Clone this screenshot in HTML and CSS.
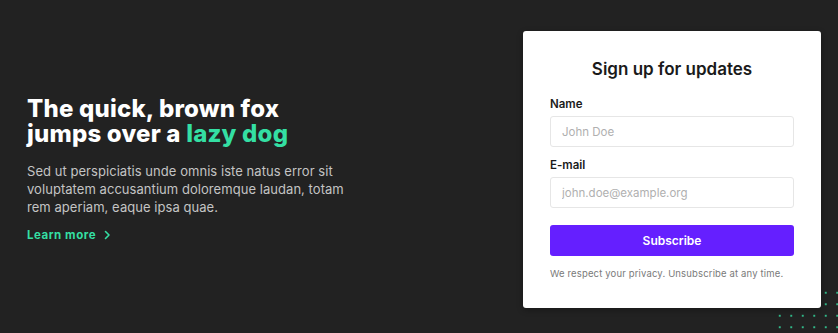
FILE: index.html
```html
<!DOCTYPE html>
<html lang="en">
<head>
    <meta charset="UTF-8">
    <meta name="viewport" content="width=device-width, initial-scale=1.0">
    <title>Sign up for updates</title>
    <link rel="stylesheet" href="styles.css">
</head>
<body>
    <section class="hero">
        <div class="dots"></div>

        <div class="hero-text">
            <h1>The quick, brown fox jumps over a <span class="accent">lazy dog</span></h1>
            <p>Sed ut perspiciatis unde omnis iste natus error sit voluptatem accusantium doloremque laudan, totam rem aperiam, eaque ipsa quae.</p>
            <a href="#" class="learn-more">Learn more
                <svg width="8" height="10" viewBox="0 0 8 10" fill="none" stroke="currentColor" stroke-width="1.6" stroke-linecap="round" stroke-linejoin="round"><path d="M2.5 1.5 L6 5 L2.5 8.5"/></svg>
            </a>
        </div>

        <form class="signup-card" onsubmit="return false;">
            <h2>Sign up for updates</h2>
            <label class="field-label" for="name">Name</label>
            <input class="field-input" id="name" type="text" placeholder="John Doe">
            <label class="field-label" for="email">E-mail</label>
            <input class="field-input" id="email" type="email" placeholder="john.doe@example.org">
            <button class="subscribe-btn" type="submit">Subscribe</button>
            <p class="privacy">We respect your privacy. Unsubscribe at any time.</p>
        </form>
    </section>
</body>
</html>
```

FILE: styles.css
```css
:root {
    --bg-color: #222222;
    --accent-color: #34dfa3;
    --purple: #651fff;
    --text-muted: #c4c4c4;
    --border-color: #e6e6e6;
}

* {
    box-sizing: border-box;
    margin: 0;
    padding: 0;
}

body {
    font-family: Inter, "Noto Sans", sans-serif;
    background: var(--bg-color);
    color: #ffffff;
}

.hero {
    position: relative;
    height: 333px;
    display: flex;
    align-items: center;
    justify-content: space-between;
    padding: 6px 17px 0 27px;
    overflow: hidden;
}

.dots {
    position: absolute;
    left: 774px;
    top: 287px;
    width: 80px;
    height: 60px;
    background-image: radial-gradient(circle, rgba(52, 223, 163, 0.8) 1px, transparent 1.5px);
    background-size: 11.5px 11.5px;
}

.hero-text {
    width: 345px;
}

.hero-text h1 {
    width: 305px;
    font-size: 24px;
    font-weight: 800;
    line-height: 25px;
    letter-spacing: 0.2px;
    margin-bottom: 16px;
}

.accent {
    color: var(--accent-color);
}

.hero-text p {
    max-width: 330px;
    font-size: 13px;
    line-height: 18px;
    letter-spacing: 0.05px;
    color: var(--text-muted);
    margin-bottom: 7px;
}

.learn-more {
    display: inline-flex;
    align-items: center;
    gap: 7px;
    font-size: 11.5px;
    font-weight: 700;
    line-height: 16px;
    letter-spacing: 0.55px;
    color: var(--accent-color);
    text-decoration: none;
}

.signup-card {
    position: relative;
    width: 298px;
    background: #ffffff;
    border-radius: 3px;
    padding: 27px 27px 28px;
    display: flex;
    flex-direction: column;
    box-shadow: 0 2px 6px rgba(0, 0, 0, 0.3);
}

.signup-card h2 {
    font-size: 17px;
    font-weight: 600;
    line-height: 22px;
    text-align: center;
    color: #1a1a1a;
    margin-bottom: 17px;
}

.field-label {
    font-size: 11.5px;
    font-weight: 600;
    line-height: 14px;
    color: #1a1a1a;
    margin-bottom: 5px;
}

.field-input {
    height: 31px;
    border: 1px solid var(--border-color);
    border-radius: 3px;
    padding: 0 11px;
    font-family: inherit;
    font-size: 11.5px;
    color: #333;
    margin-bottom: 11px;
}

.field-input::placeholder {
    color: #b0b0b0;
}

.field-input:last-of-type {
    margin-bottom: 17px;
}

.subscribe-btn {
    height: 31px;
    border: none;
    border-radius: 3px;
    background: var(--purple);
    color: #ffffff;
    font-family: inherit;
    font-size: 12px;
    font-weight: 600;
    margin-bottom: 11px;
    cursor: pointer;
}

.privacy {
    font-size: 9.5px;
    line-height: 13px;
    letter-spacing: 0.15px;
    color: #7a7a7a;
}
```
